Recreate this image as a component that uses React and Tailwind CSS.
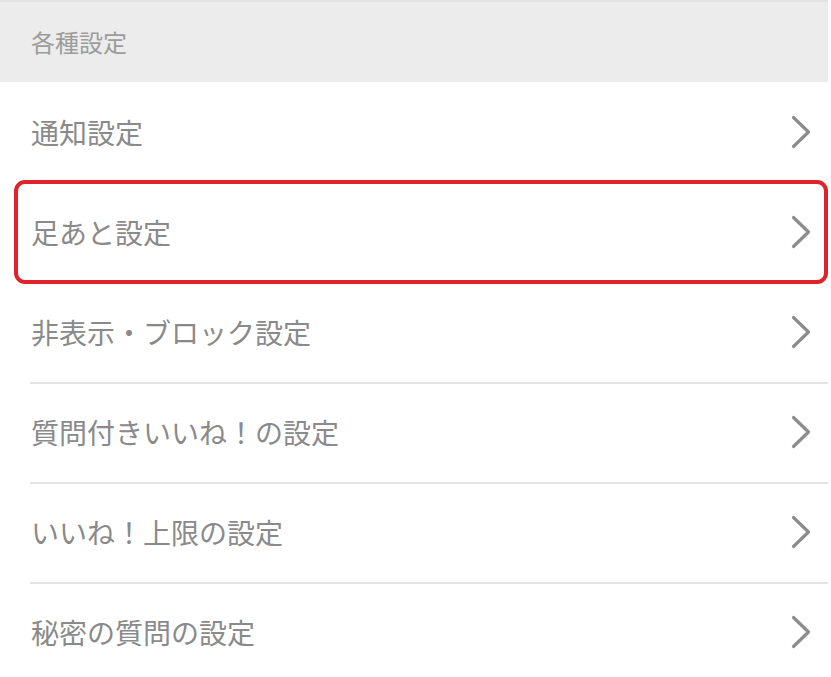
const items = [
  "通知設定",
  "足あと設定",
  "非表示・ブロック設定",
  "質問付きいいね！の設定",
  "いいね！上限の設定",
  "秘密の質問の設定",
];

function Chevron() {
  return (
    <svg width="22" height="34" viewBox="0 0 22 34" className="shrink-0">
      <path
        d="M3.5 2.5 L18.5 17 L3.5 31.5"
        fill="none"
        stroke="#8c8c8c"
        strokeWidth="3.2"
        strokeLinecap="round"
        strokeLinejoin="round"
      />
    </svg>
  );
}

export default function App() {
  return (
    <div
      className="w-[831px] h-[677px] bg-white overflow-hidden"
      style={{ fontFamily: '"Noto Sans CJK JP", "Noto Sans", sans-serif' }}
    >
      <div className="w-[828px]">
        {/* セクション見出し */}
        <div className="border-t-2 border-[#e2e2e2] bg-[#ececec] h-[82px] flex items-center pl-[31px]">
          <span className="text-[24px] text-[#9c9c9c]">各種設定</span>
        </div>

        {items.map((label, i) => (
          <div key={label} className="relative h-[100px]">
            {i > 2 && (
              <div className="absolute left-[30px] right-0 top-0 h-[2px] bg-[#e3e3e3]" />
            )}
            <div className="h-full flex items-center justify-between pl-[31px] pr-[16px]">
              <span className="text-[28px] text-[#8a8a8a]">{label}</span>
              <Chevron />
            </div>
            {i === 1 && (
              <div className="absolute z-10 left-[14px] right-0 top-[-2px] bottom-[-2px] border-4 border-[#e0232a] rounded-[11px]" />
            )}
          </div>
        ))}
      </div>
    </div>
  );
}
